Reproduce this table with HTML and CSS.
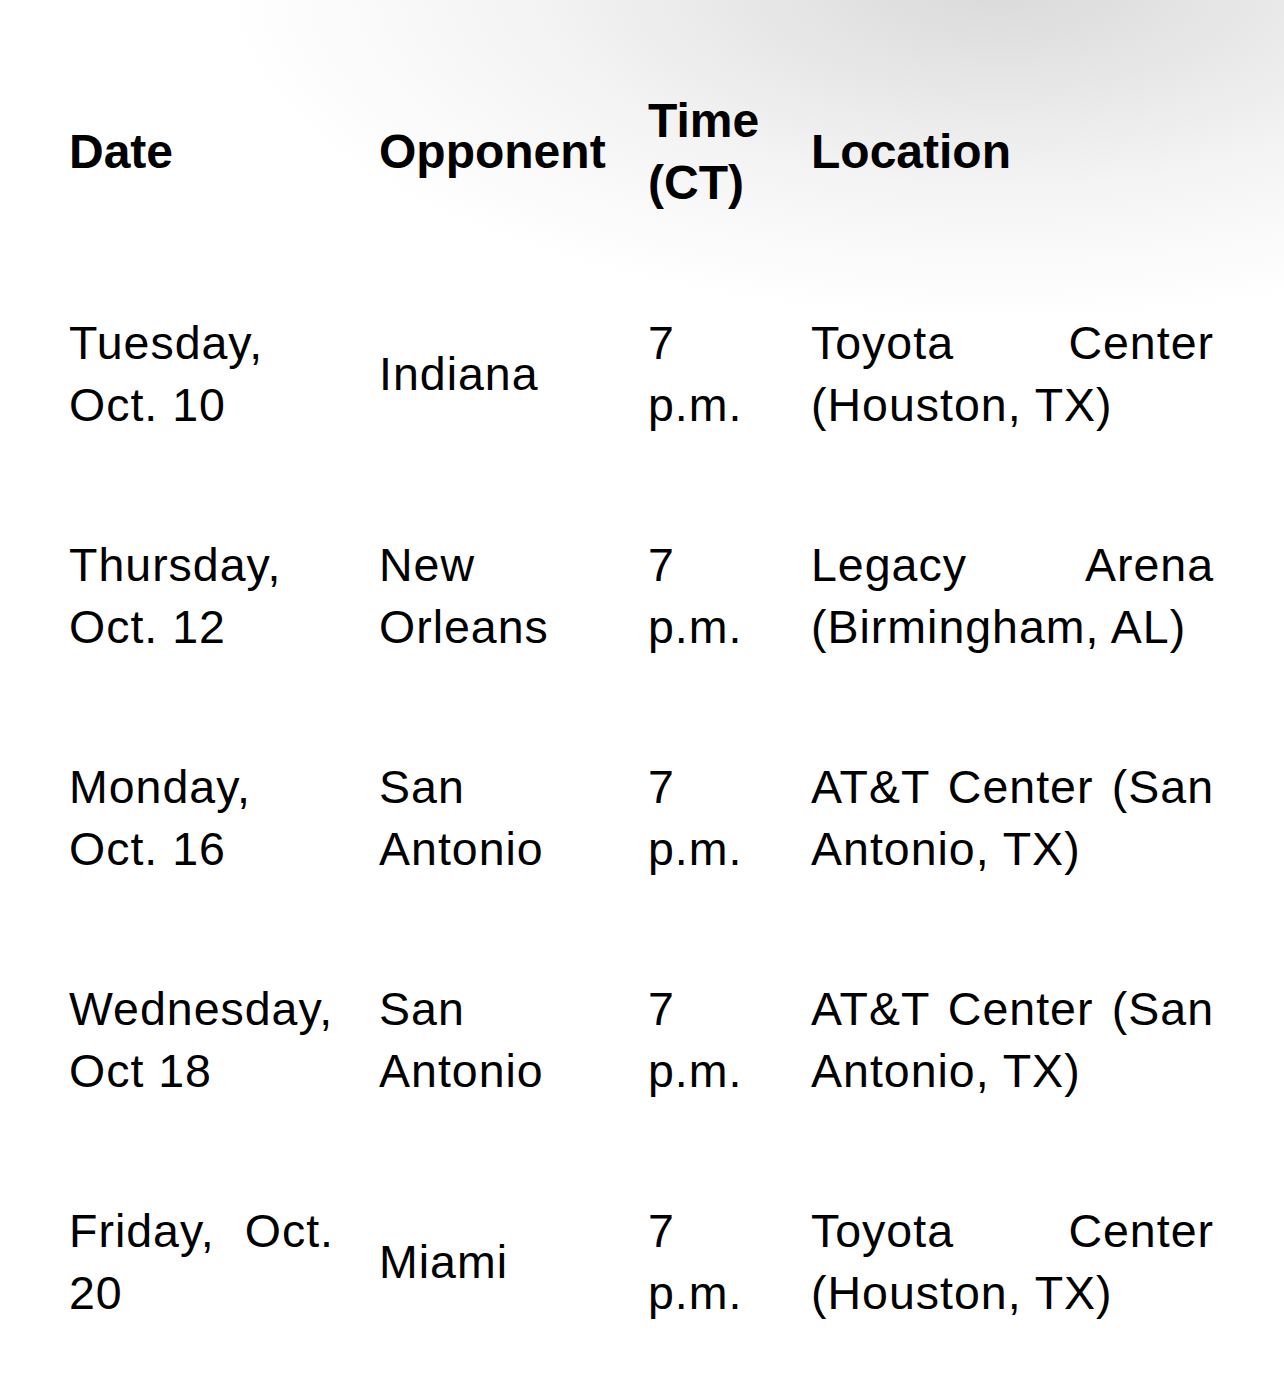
FILE: index.html
```html
<!DOCTYPE html>
<html lang="en">
<head>
<meta charset="utf-8">
<title>Schedule</title>
<link rel="stylesheet" href="styles.css">
</head>
<body>
<div class="page">
  <div class="schedule">
    <div class="cell head c1">Date</div>
    <div class="cell head c2">Opponent</div>
    <div class="cell head c3">Time (CT)</div>
    <div class="cell head c4">Location</div>

    <div class="cell c1">Tuesday, Oct. 10</div>
    <div class="cell c2">Indiana</div>
    <div class="cell c3">7 p.m.</div>
    <div class="cell c4">Toyota Center (Houston, TX)</div>

    <div class="cell c1">Thursday, Oct. 12</div>
    <div class="cell c2">New Orleans</div>
    <div class="cell c3">7 p.m.</div>
    <div class="cell c4">Legacy Arena (Birmingham, AL)</div>

    <div class="cell c1">Monday, Oct. 16</div>
    <div class="cell c2">San Antonio</div>
    <div class="cell c3">7 p.m.</div>
    <div class="cell c4">AT&amp;T Center (San Antonio, TX)</div>

    <div class="cell c1">Wednesday, Oct 18</div>
    <div class="cell c2">San Antonio</div>
    <div class="cell c3">7 p.m.</div>
    <div class="cell c4">AT&amp;T Center (San Antonio, TX)</div>

    <div class="cell c1">Friday, Oct. 20</div>
    <div class="cell c2">Miami</div>
    <div class="cell c3">7 p.m.</div>
    <div class="cell c4">Toyota Center (Houston, TX)</div>
  </div>
</div>
</body>
</html>
```

FILE: styles.css
```css
html, body {
  margin: 0;
  padding: 0;
}

body {
  width: 1284px;
  height: 1395px;
  overflow: hidden;
  background-color: #ffffff;
  background-image: radial-gradient(ellipse 780px 340px at 1000px -20px, #d9d9d9 0%, #e6e6e6 30%, #f4f4f4 62%, #ffffff 100%);
  background-repeat: no-repeat;
  font-family: "Liberation Sans", Arial, Helvetica, sans-serif;
  color: #000;
}

.page {
  padding: 41px 0 0 69px;
}

.schedule {
  display: grid;
  grid-template-columns: 310px 269px 163px 403px;
  align-items: center;
}

.cell {
  font-size: 46.5px;
  line-height: 62px;
  letter-spacing: 1px;
  text-align: justify;
  padding: 49px 0;
  box-sizing: border-box;
}

.head {
  font-weight: bold;
  font-size: 48px;
  letter-spacing: 0;
  text-align: left;
}

.c1 {
  padding-right: 45px;
}

.c2 {
  padding-right: 40px;
}

.c3 {
  padding-right: 44px;
}
```
